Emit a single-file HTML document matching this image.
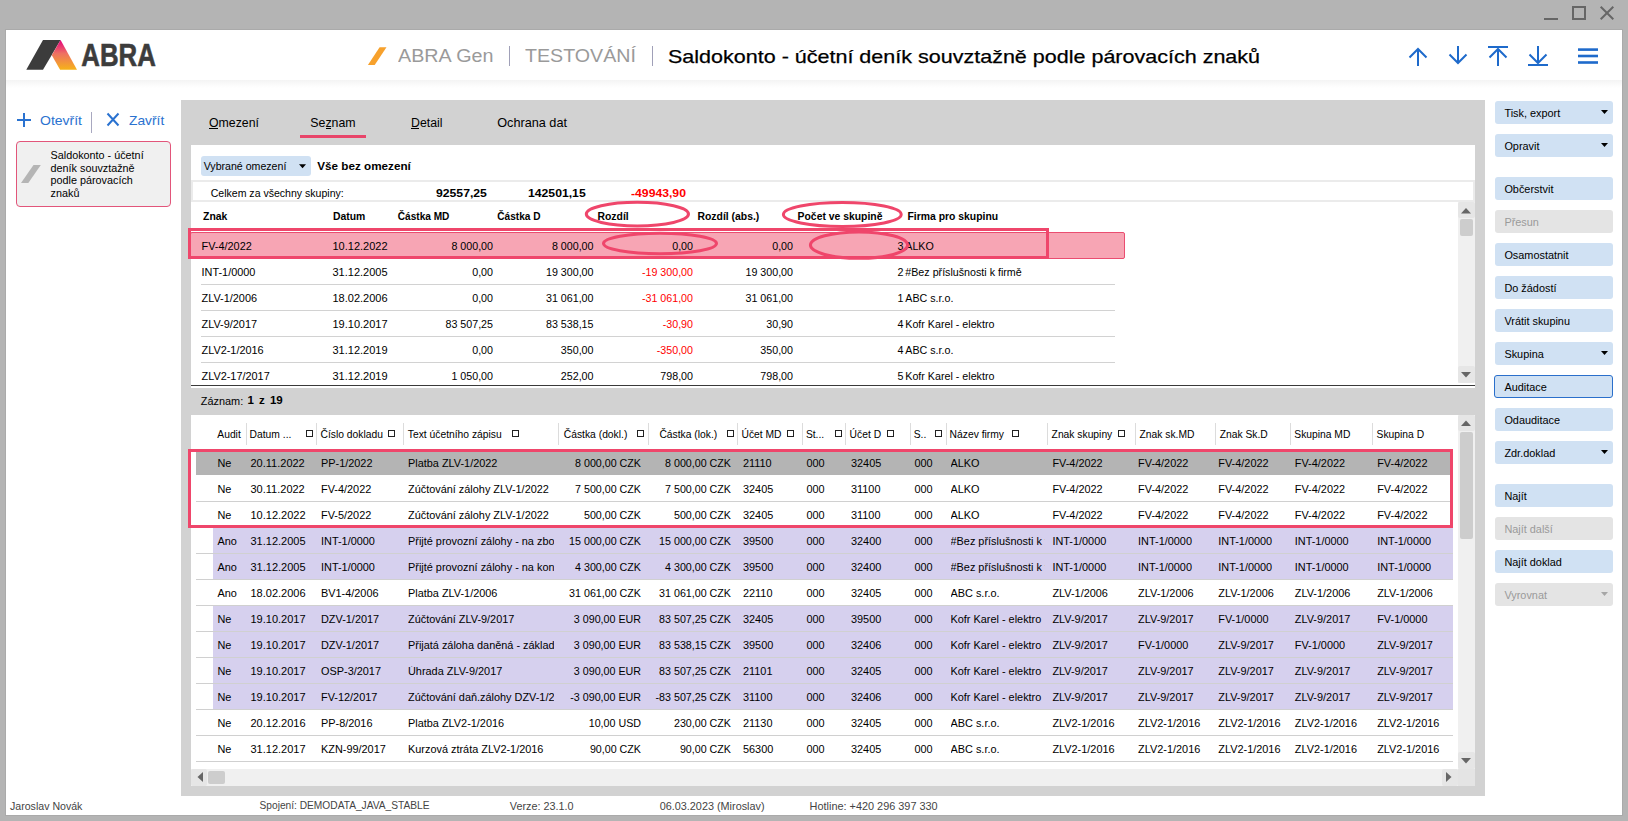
<!DOCTYPE html><html><head><meta charset="utf-8"><style>
html,body{margin:0;padding:0;}
body{width:1628px;height:821px;overflow:hidden;position:relative;background:#b4b4b4;font-family:"Liberation Sans",sans-serif;color:#000;}
div{position:absolute;box-sizing:border-box;}
.t{white-space:pre;}
svg{position:absolute;}
</style></head><body>
<div style="left:5px;top:29px;width:1618px;height:787px;background:#aaaaaa;"></div>
<div style="left:6px;top:30px;width:1616px;height:785px;background:#fff;"></div>
<div style="left:1544px;top:18px;width:14px;height:2px;background:#666;"></div>
<div style="left:1572px;top:6px;width:14px;height:14px;border:2px solid #666;"></div>
<svg style="left:1598px;top:4px" width="18" height="18" viewBox="1598 4 18 18"><path d="M1600.7 6.7L1613.3 19.3M1613.3 6.7L1600.7 19.3" stroke="#666" stroke-width="2" fill="none"/></svg>
<div style="left:6px;top:80px;width:1616px;height:8px;background:linear-gradient(#f4f4f4,#fbfbfb 60%,#fff);"></div>
<svg style="left:20px;top:36px" width="150" height="40" viewBox="20 36 150 40">
<defs><linearGradient id="lg" x1="0" y1="0" x2="0" y2="1"><stop offset="0" stop-color="#e5007d"/><stop offset="0.45" stop-color="#ee7063"/><stop offset="1" stop-color="#f6b318"/></linearGradient></defs>
<polygon points="43,40 60.6,40 43,69.8 26.3,69.8" fill="#3c3c3c"/>
<polygon points="60.6,40 77,69.8 60.1,69.8 51.8,55.3" fill="url(#lg)"/>
<text x="81.3" y="65.5" font-family="Liberation Sans" font-weight="700" font-size="31" fill="#3c3c3c" stroke="#3c3c3c" stroke-width="0.6" textLength="74.5" lengthAdjust="spacingAndGlyphs">ABRA</text>
</svg>
<svg style="left:360px;top:40px" width="40" height="30" viewBox="360 40 40 30"><polygon points="379.6,47.2 386.5,47.2 374.7,64.9 367.9,64.9" fill="#f7a12c"/></svg>
<div class="t" style="top:46.67px;font-size:18.7px;line-height:18.7px;color:#9a9a9a;left:397.70px;transform:scaleX(1.056);transform-origin:0 0;">ABRA Gen</div>
<div style="left:509px;top:46px;width:1px;height:20px;background:#a0a0b8;"></div>
<div class="t" style="top:46.67px;font-size:18.7px;line-height:18.7px;color:#9a9a9a;left:525.00px;transform:scaleX(1.051);transform-origin:0 0;">TESTOVÁNÍ</div>
<div style="left:652px;top:46px;width:1px;height:20px;background:#a0a0b8;"></div>
<div class="t" style="top:46.72px;font-size:19px;line-height:19px;left:668.40px;transform:scaleX(1.1324);transform-origin:0 0;-webkit-text-stroke:0.25px #000;">Saldokonto - účetní deník souvztažně podle párovacích znaků</div>
<svg style="left:1400px;top:40px" width="210" height="32" viewBox="1400 40 210 32">
<g stroke="#1e6acb" stroke-width="2" fill="none" stroke-linecap="butt">
<path d="M1418 66V49M1409.5 57.5L1418 49L1426.5 57.5"/>
<path d="M1458 46V63M1449.5 54.5L1458 63L1466.5 54.5"/>
<path d="M1488 47H1508M1498 66V49M1489.5 57.5L1498 49L1506.5 57.5"/>
<path d="M1538 46V63M1529.5 54.5L1538 63L1546.5 54.5M1528 65H1548"/>
</g>
<g fill="#1e6acb"><rect x="1578" y="48.3" width="20" height="2.6"/><rect x="1578" y="54.7" width="20" height="2.6"/><rect x="1578" y="61.2" width="20" height="2.6"/></g>
</svg>
<svg style="left:14px;top:110px" width="110" height="20" viewBox="14 110 110 20">
<g stroke="#2a72d0" stroke-width="2" fill="none"><path d="M17 120H31M24 113V127"/><path d="M107.5 113.5L118.5 125.5M118.5 113.5L107.5 125.5"/></g></svg>
<div class="t" style="top:114.30px;font-size:13px;line-height:13px;color:#2a72d0;left:39.80px;transform:scaleX(1.077);transform-origin:0 0;">Otevřít</div>
<div style="left:91px;top:112px;width:1px;height:21px;background:#a8a8c0;"></div>
<div class="t" style="top:114.30px;font-size:13px;line-height:13px;color:#2a72d0;left:129.00px;transform:scaleX(1.06);transform-origin:0 0;">Zavřít</div>
<div style="left:16px;top:141px;width:155px;height:66px;background:#f0f0f0;border:1px solid #e2557a;border-radius:4px;"></div>
<svg style="left:20px;top:162px" width="24" height="24" viewBox="20 162 24 24"><polygon points="33.5,165 40.8,165 28.3,183 21,183" fill="#b5b5b5"/></svg>
<div class="t" style="top:149.86px;font-size:10.8px;line-height:10.8px;left:50.60px;">Saldokonto - účetní</div>
<div class="t" style="top:162.66px;font-size:10.8px;line-height:10.8px;left:50.60px;">deník souvztažně</div>
<div class="t" style="top:175.46px;font-size:10.8px;line-height:10.8px;left:50.60px;">podle párovacích</div>
<div class="t" style="top:188.26px;font-size:10.8px;line-height:10.8px;left:50.60px;">znaků</div>
<div style="left:181px;top:100px;width:1304px;height:696px;background:#d2d2d2;"></div>
<div class="t" style="top:116.59px;font-size:12.3px;line-height:12.3px;left:209.00px;">Omezení</div>
<div style="left:209px;top:128px;width:9px;height:1px;background:#000;"></div>
<div class="t" style="top:116.55px;font-size:12.35px;line-height:12.35px;left:310.30px;">Seznam</div>
<div style="left:300px;top:135px;width:66px;height:3px;background:#e8456a;"></div>
<div style="left:326px;top:128px;width:5px;height:1px;background:#000;"></div>
<div class="t" style="top:116.59px;font-size:12.3px;line-height:12.3px;left:411.00px;">Detail</div>
<div style="left:411px;top:128px;width:8px;height:1px;background:#000;"></div>
<div class="t" style="top:117.25px;font-size:12.7px;line-height:12.7px;left:497.20px;">Ochrana dat</div>
<div style="left:191px;top:145px;width:1284px;height:241px;background:#fff;"></div>
<div style="left:201px;top:156px;width:110px;height:20px;background:#d0e1f3;border-radius:3px;"></div>
<div class="t" style="top:161.33px;font-size:10.6px;line-height:10.6px;left:203.70px;">Vybrané omezení</div>
<svg style="left:296px;top:162px" width="14" height="10" viewBox="296 162 14 10"><polygon points="299,164.3 306,164.3 302.5,168.3" fill="#000"/></svg>
<div class="t" style="top:159.70px;font-size:11.7px;line-height:11.7px;font-weight:700;left:317.30px;">Vše bez omezení</div>
<div style="left:191px;top:180px;width:1284px;height:22px;border:2px solid #ebebeb;"></div>
<div class="t" style="top:187.57px;font-size:10.55px;line-height:10.55px;left:210.70px;">Celkem za všechny skupiny:</div>
<div class="t" style="top:187.69px;font-size:11px;line-height:11px;font-weight:700;left:435.60px;transform:scaleX(1.109);transform-origin:0 0;">92557,25</div>
<div class="t" style="top:187.69px;font-size:11px;line-height:11px;font-weight:700;left:527.80px;transform:scaleX(1.109);transform-origin:0 0;">142501,15</div>
<div class="t" style="top:187.69px;font-size:11px;line-height:11px;font-weight:700;color:#ff0000;left:630.50px;transform:scaleX(1.109);transform-origin:0 0;">-49943,90</div>
<div class="t" style="top:211.50px;font-size:10.4px;line-height:10.4px;font-weight:700;left:203.10px;">Znak</div>
<div class="t" style="top:211.50px;font-size:10.4px;line-height:10.4px;font-weight:700;left:333.00px;">Datum</div>
<div class="t" style="top:211.75px;font-size:10.1px;line-height:10.1px;font-weight:700;left:397.80px;">Částka MD</div>
<div class="t" style="top:211.75px;font-size:10.1px;line-height:10.1px;font-weight:700;left:497.30px;">Částka D</div>
<div class="t" style="top:211.50px;font-size:10.4px;line-height:10.4px;font-weight:700;left:597.50px;">Rozdíl</div>
<div class="t" style="top:211.50px;font-size:10.4px;line-height:10.4px;font-weight:700;left:697.50px;">Rozdíl (abs.)</div>
<div class="t" style="top:211.50px;font-size:10.4px;line-height:10.4px;font-weight:700;left:797.60px;">Počet ve skupině</div>
<div class="t" style="top:211.50px;font-size:10.4px;line-height:10.4px;font-weight:700;left:907.50px;">Firma pro skupinu</div>
<div style="left:190px;top:232px;width:935px;height:27px;background:#f7a5b4;border:1px solid #ea4d70;border-radius:2px;"></div>
<div style="left:201px;top:310px;width:0px;height:0px;"></div>
<div style="left:201px;top:336px;width:0px;height:0px;"></div>
<div style="left:201px;top:362px;width:0px;height:0px;"></div>
<div style="left:201px;top:388px;width:0px;height:0px;"></div>
<div style="left:201px;top:414px;width:0px;height:0px;"></div>
<div class="t" style="top:240.77px;font-size:10.9px;line-height:10.9px;left:201.50px;">FV-4/2022</div>
<div class="t" style="top:240.69px;font-size:11px;line-height:11px;left:332.50px;">10.12.2022</div>
<div class="t" style="top:240.94px;font-size:10.7px;line-height:10.7px;right:1135.00px;text-align:right;">8 000,00</div>
<div class="t" style="top:240.94px;font-size:10.7px;line-height:10.7px;right:1034.50px;text-align:right;">8 000,00</div>
<div class="t" style="top:240.94px;font-size:10.7px;line-height:10.7px;right:935.00px;text-align:right;">0,00</div>
<div class="t" style="top:240.94px;font-size:10.7px;line-height:10.7px;right:835.00px;text-align:right;">0,00</div>
<div class="t" style="top:240.94px;font-size:10.7px;line-height:10.7px;right:724.50px;text-align:right;">3</div>
<div class="t" style="top:240.94px;font-size:10.7px;line-height:10.7px;left:905.30px;">ALKO</div>
<div class="t" style="top:266.77px;font-size:10.9px;line-height:10.9px;left:201.50px;">INT-1/0000</div>
<div class="t" style="top:266.69px;font-size:11px;line-height:11px;left:332.50px;">31.12.2005</div>
<div class="t" style="top:266.94px;font-size:10.7px;line-height:10.7px;right:1135.00px;text-align:right;">0,00</div>
<div class="t" style="top:266.94px;font-size:10.7px;line-height:10.7px;right:1034.50px;text-align:right;">19 300,00</div>
<div class="t" style="top:266.94px;font-size:10.7px;line-height:10.7px;color:#ff0000;right:935.00px;text-align:right;">-19 300,00</div>
<div class="t" style="top:266.94px;font-size:10.7px;line-height:10.7px;right:835.00px;text-align:right;">19 300,00</div>
<div class="t" style="top:266.94px;font-size:10.7px;line-height:10.7px;right:724.50px;text-align:right;">2</div>
<div class="t" style="top:266.94px;font-size:10.7px;line-height:10.7px;left:905.30px;">#Bez příslušnosti k firmě</div>
<div class="t" style="top:292.77px;font-size:10.9px;line-height:10.9px;left:201.50px;">ZLV-1/2006</div>
<div class="t" style="top:292.69px;font-size:11px;line-height:11px;left:332.50px;">18.02.2006</div>
<div class="t" style="top:292.94px;font-size:10.7px;line-height:10.7px;right:1135.00px;text-align:right;">0,00</div>
<div class="t" style="top:292.94px;font-size:10.7px;line-height:10.7px;right:1034.50px;text-align:right;">31 061,00</div>
<div class="t" style="top:292.94px;font-size:10.7px;line-height:10.7px;color:#ff0000;right:935.00px;text-align:right;">-31 061,00</div>
<div class="t" style="top:292.94px;font-size:10.7px;line-height:10.7px;right:835.00px;text-align:right;">31 061,00</div>
<div class="t" style="top:292.94px;font-size:10.7px;line-height:10.7px;right:724.50px;text-align:right;">1</div>
<div class="t" style="top:292.94px;font-size:10.7px;line-height:10.7px;left:905.30px;">ABC s.r.o.</div>
<div class="t" style="top:318.77px;font-size:10.9px;line-height:10.9px;left:201.50px;">ZLV-9/2017</div>
<div class="t" style="top:318.69px;font-size:11px;line-height:11px;left:332.50px;">19.10.2017</div>
<div class="t" style="top:318.94px;font-size:10.7px;line-height:10.7px;right:1135.00px;text-align:right;">83 507,25</div>
<div class="t" style="top:318.94px;font-size:10.7px;line-height:10.7px;right:1034.50px;text-align:right;">83 538,15</div>
<div class="t" style="top:318.94px;font-size:10.7px;line-height:10.7px;color:#ff0000;right:935.00px;text-align:right;">-30,90</div>
<div class="t" style="top:318.94px;font-size:10.7px;line-height:10.7px;right:835.00px;text-align:right;">30,90</div>
<div class="t" style="top:318.94px;font-size:10.7px;line-height:10.7px;right:724.50px;text-align:right;">4</div>
<div class="t" style="top:318.94px;font-size:10.7px;line-height:10.7px;left:905.30px;">Kofr Karel - elektro</div>
<div class="t" style="top:344.77px;font-size:10.9px;line-height:10.9px;left:201.50px;">ZLV2-1/2016</div>
<div class="t" style="top:344.69px;font-size:11px;line-height:11px;left:332.50px;">31.12.2019</div>
<div class="t" style="top:344.94px;font-size:10.7px;line-height:10.7px;right:1135.00px;text-align:right;">0,00</div>
<div class="t" style="top:344.94px;font-size:10.7px;line-height:10.7px;right:1034.50px;text-align:right;">350,00</div>
<div class="t" style="top:344.94px;font-size:10.7px;line-height:10.7px;color:#ff0000;right:935.00px;text-align:right;">-350,00</div>
<div class="t" style="top:344.94px;font-size:10.7px;line-height:10.7px;right:835.00px;text-align:right;">350,00</div>
<div class="t" style="top:344.94px;font-size:10.7px;line-height:10.7px;right:724.50px;text-align:right;">4</div>
<div class="t" style="top:344.94px;font-size:10.7px;line-height:10.7px;left:905.30px;">ABC s.r.o.</div>
<div class="t" style="top:370.77px;font-size:10.9px;line-height:10.9px;left:201.50px;">ZLV2-17/2017</div>
<div class="t" style="top:370.69px;font-size:11px;line-height:11px;left:332.50px;">31.12.2019</div>
<div class="t" style="top:370.94px;font-size:10.7px;line-height:10.7px;right:1135.00px;text-align:right;">1 050,00</div>
<div class="t" style="top:370.94px;font-size:10.7px;line-height:10.7px;right:1034.50px;text-align:right;">252,00</div>
<div class="t" style="top:370.94px;font-size:10.7px;line-height:10.7px;right:935.00px;text-align:right;">798,00</div>
<div class="t" style="top:370.94px;font-size:10.7px;line-height:10.7px;right:835.00px;text-align:right;">798,00</div>
<div class="t" style="top:370.94px;font-size:10.7px;line-height:10.7px;right:724.50px;text-align:right;">5</div>
<div class="t" style="top:370.94px;font-size:10.7px;line-height:10.7px;left:905.30px;">Kofr Karel - elektro</div>
<div style="left:201px;top:284px;width:914px;height:1px;background:#d2d2d2;"></div>
<div style="left:201px;top:310px;width:914px;height:1px;background:#d2d2d2;"></div>
<div style="left:201px;top:336px;width:914px;height:1px;background:#d2d2d2;"></div>
<div style="left:201px;top:362px;width:914px;height:1px;background:#d2d2d2;"></div>
<div style="left:1458px;top:202px;width:17px;height:181px;background:#f0f0f0;"></div>
<div style="left:1458px;top:202px;width:17px;height:16px;background:#e6e6e6;border-radius:2px;"></div>
<div style="left:1460px;top:219px;width:13px;height:17px;background:#cdcdcd;border-radius:2px;"></div>
<div style="left:1458px;top:366px;width:17px;height:17px;background:#e6e6e6;border-radius:2px;"></div>
<svg style="left:1458px;top:202px" width="17" height="181" viewBox="1458 202 17 181"><polygon points="1461,213.5 1471,213.5 1466,208" fill="#666"/><polygon points="1461,372 1471,372 1466,377.5" fill="#666"/></svg>
<div style="left:191px;top:385px;width:1284px;height:1px;background:#3a3a3a;"></div>
<div style="left:191px;top:386px;width:1284px;height:2px;background:#fff;"></div>
<div class="t" style="top:395.77px;font-size:10.9px;line-height:10.9px;left:200.80px;">Záznam:</div>
<div class="t" style="top:395.27px;font-size:11.5px;line-height:11.5px;font-weight:700;left:247.40px;word-spacing:2px;">1 z 19</div>
<div style="left:191px;top:415px;width:1284px;height:371px;background:#fff;"></div>
<div class="t" style="top:430.28px;font-size:10.3px;line-height:10.3px;left:217.30px;">Audit</div>
<div style="left:246px;top:423px;width:1px;height:22px;background:#dcdcdc;"></div>
<div class="t" style="top:430.28px;font-size:10.3px;line-height:10.3px;left:249.60px;">Datum ...</div>
<div style="left:306px;top:430px;width:7px;height:7px;border:1px solid #222;"></div>
<div style="left:316px;top:423px;width:1px;height:22px;background:#dcdcdc;"></div>
<div class="t" style="top:430.28px;font-size:10.3px;line-height:10.3px;left:320.50px;">Číslo dokladu</div>
<div style="left:388px;top:430px;width:7px;height:7px;border:1px solid #222;"></div>
<div style="left:403px;top:423px;width:1px;height:22px;background:#dcdcdc;"></div>
<div class="t" style="top:430.28px;font-size:10.3px;line-height:10.3px;left:407.80px;">Text účetního zápisu</div>
<div style="left:512px;top:430px;width:7px;height:7px;border:1px solid #222;"></div>
<div style="left:558px;top:423px;width:1px;height:22px;background:#dcdcdc;"></div>
<div class="t" style="top:430.28px;font-size:10.3px;line-height:10.3px;left:563.80px;">Částka (dokl.)</div>
<div style="left:637px;top:430px;width:7px;height:7px;border:1px solid #222;"></div>
<div style="left:648px;top:423px;width:1px;height:22px;background:#dcdcdc;"></div>
<div class="t" style="top:430.28px;font-size:10.3px;line-height:10.3px;left:659.40px;">Částka (lok.)</div>
<div style="left:727px;top:430px;width:7px;height:7px;border:1px solid #222;"></div>
<div style="left:737px;top:423px;width:1px;height:22px;background:#dcdcdc;"></div>
<div class="t" style="top:430.28px;font-size:10.3px;line-height:10.3px;left:741.50px;">Účet MD</div>
<div style="left:787px;top:430px;width:7px;height:7px;border:1px solid #222;"></div>
<div style="left:802px;top:423px;width:1px;height:22px;background:#dcdcdc;"></div>
<div class="t" style="top:430.28px;font-size:10.3px;line-height:10.3px;left:805.90px;">St...</div>
<div style="left:835px;top:430px;width:7px;height:7px;border:1px solid #222;"></div>
<div style="left:845px;top:423px;width:1px;height:22px;background:#dcdcdc;"></div>
<div class="t" style="top:430.28px;font-size:10.3px;line-height:10.3px;left:849.60px;">Účet D</div>
<div style="left:887px;top:430px;width:7px;height:7px;border:1px solid #222;"></div>
<div style="left:910px;top:423px;width:1px;height:22px;background:#dcdcdc;"></div>
<div class="t" style="top:430.28px;font-size:10.3px;line-height:10.3px;left:913.70px;">S..</div>
<div style="left:935px;top:430px;width:7px;height:7px;border:1px solid #222;"></div>
<div style="left:946px;top:423px;width:1px;height:22px;background:#dcdcdc;"></div>
<div class="t" style="top:430.28px;font-size:10.3px;line-height:10.3px;left:949.60px;">Název firmy</div>
<div style="left:1012px;top:430px;width:7px;height:7px;border:1px solid #222;"></div>
<div style="left:1047px;top:423px;width:1px;height:22px;background:#dcdcdc;"></div>
<div class="t" style="top:430.28px;font-size:10.3px;line-height:10.3px;left:1051.60px;">Znak skupiny</div>
<div style="left:1118px;top:430px;width:7px;height:7px;border:1px solid #222;"></div>
<div style="left:1135px;top:423px;width:1px;height:22px;background:#dcdcdc;"></div>
<div class="t" style="top:430.28px;font-size:10.3px;line-height:10.3px;left:1139.50px;">Znak sk.MD</div>
<div style="left:1215px;top:423px;width:1px;height:22px;background:#dcdcdc;"></div>
<div class="t" style="top:430.28px;font-size:10.3px;line-height:10.3px;left:1219.70px;">Znak Sk.D</div>
<div style="left:1290px;top:423px;width:1px;height:22px;background:#dcdcdc;"></div>
<div class="t" style="top:430.28px;font-size:10.3px;line-height:10.3px;left:1294.30px;">Skupina MD</div>
<div style="left:1372px;top:423px;width:1px;height:22px;background:#dcdcdc;"></div>
<div class="t" style="top:430.28px;font-size:10.3px;line-height:10.3px;left:1376.60px;">Skupina D</div>
<div style="left:196px;top:452px;width:1257px;height:23px;background:#b4b4b4;"></div>
<div style="left:213px;top:527px;width:1240px;height:26px;background:#d6d0ee;"></div>
<div style="left:213px;top:553px;width:1240px;height:26px;background:#d6d0ee;"></div>
<div style="left:213px;top:605px;width:1240px;height:26px;background:#d6d0ee;"></div>
<div style="left:213px;top:631px;width:1240px;height:26px;background:#d6d0ee;"></div>
<div style="left:213px;top:657px;width:1240px;height:26px;background:#d6d0ee;"></div>
<div style="left:213px;top:683px;width:1240px;height:26px;background:#d6d0ee;"></div>
<div style="left:196px;top:501px;width:1257px;height:1px;background:#d0d0d0;"></div>
<div style="left:196px;top:527px;width:1257px;height:1px;background:#d0d0d0;"></div>
<div style="left:196px;top:553px;width:1257px;height:1px;background:#d0d0d0;"></div>
<div style="left:196px;top:579px;width:1257px;height:1px;background:#d0d0d0;"></div>
<div style="left:196px;top:605px;width:1257px;height:1px;background:#d0d0d0;"></div>
<div style="left:196px;top:631px;width:1257px;height:1px;background:#d0d0d0;"></div>
<div style="left:196px;top:657px;width:1257px;height:1px;background:#d0d0d0;"></div>
<div style="left:196px;top:683px;width:1257px;height:1px;background:#d0d0d0;"></div>
<div style="left:196px;top:709px;width:1257px;height:1px;background:#d0d0d0;"></div>
<div style="left:196px;top:735px;width:1257px;height:1px;background:#d0d0d0;"></div>
<div style="left:196px;top:761px;width:1257px;height:1px;background:#d0d0d0;"></div>
<div class="t" style="top:457.77px;font-size:10.9px;line-height:10.9px;left:217.50px;">Ne</div>
<div class="t" style="top:457.69px;font-size:11px;line-height:11px;left:250.50px;">20.11.2022</div>
<div class="t" style="top:457.77px;font-size:10.9px;line-height:10.9px;left:321.00px;">PP-1/2022</div>
<div class="t" style="top:457.77px;font-size:10.9px;line-height:10.9px;left:408.00px;width:146px;overflow:hidden;">Platba ZLV-1/2022</div>
<div class="t" style="top:457.94px;font-size:10.7px;line-height:10.7px;right:987.00px;text-align:right;">8 000,00 CZK</div>
<div class="t" style="top:457.94px;font-size:10.7px;line-height:10.7px;right:897.00px;text-align:right;">8 000,00 CZK</div>
<div class="t" style="top:457.77px;font-size:10.9px;line-height:10.9px;left:743.00px;">21110</div>
<div class="t" style="top:457.77px;font-size:10.9px;line-height:10.9px;left:806.50px;">000</div>
<div class="t" style="top:457.77px;font-size:10.9px;line-height:10.9px;left:851.00px;">32405</div>
<div class="t" style="top:457.77px;font-size:10.9px;line-height:10.9px;left:914.50px;">000</div>
<div class="t" style="top:457.77px;font-size:10.9px;line-height:10.9px;left:950.50px;width:94px;overflow:hidden;">ALKO</div>
<div class="t" style="top:457.77px;font-size:10.9px;line-height:10.9px;left:1052.40px;">FV-4/2022</div>
<div class="t" style="top:457.77px;font-size:10.9px;line-height:10.9px;left:1138.10px;">FV-4/2022</div>
<div class="t" style="top:457.77px;font-size:10.9px;line-height:10.9px;left:1218.30px;">FV-4/2022</div>
<div class="t" style="top:457.77px;font-size:10.9px;line-height:10.9px;left:1294.80px;">FV-4/2022</div>
<div class="t" style="top:457.77px;font-size:10.9px;line-height:10.9px;left:1377.20px;">FV-4/2022</div>
<div class="t" style="top:483.77px;font-size:10.9px;line-height:10.9px;left:217.50px;">Ne</div>
<div class="t" style="top:483.69px;font-size:11px;line-height:11px;left:250.50px;">30.11.2022</div>
<div class="t" style="top:483.77px;font-size:10.9px;line-height:10.9px;left:321.00px;">FV-4/2022</div>
<div class="t" style="top:483.77px;font-size:10.9px;line-height:10.9px;left:408.00px;width:146px;overflow:hidden;">Zúčtování zálohy ZLV-1/2022</div>
<div class="t" style="top:483.94px;font-size:10.7px;line-height:10.7px;right:987.00px;text-align:right;">7 500,00 CZK</div>
<div class="t" style="top:483.94px;font-size:10.7px;line-height:10.7px;right:897.00px;text-align:right;">7 500,00 CZK</div>
<div class="t" style="top:483.77px;font-size:10.9px;line-height:10.9px;left:743.00px;">32405</div>
<div class="t" style="top:483.77px;font-size:10.9px;line-height:10.9px;left:806.50px;">000</div>
<div class="t" style="top:483.77px;font-size:10.9px;line-height:10.9px;left:851.00px;">31100</div>
<div class="t" style="top:483.77px;font-size:10.9px;line-height:10.9px;left:914.50px;">000</div>
<div class="t" style="top:483.77px;font-size:10.9px;line-height:10.9px;left:950.50px;width:94px;overflow:hidden;">ALKO</div>
<div class="t" style="top:483.77px;font-size:10.9px;line-height:10.9px;left:1052.40px;">FV-4/2022</div>
<div class="t" style="top:483.77px;font-size:10.9px;line-height:10.9px;left:1138.10px;">FV-4/2022</div>
<div class="t" style="top:483.77px;font-size:10.9px;line-height:10.9px;left:1218.30px;">FV-4/2022</div>
<div class="t" style="top:483.77px;font-size:10.9px;line-height:10.9px;left:1294.80px;">FV-4/2022</div>
<div class="t" style="top:483.77px;font-size:10.9px;line-height:10.9px;left:1377.20px;">FV-4/2022</div>
<div class="t" style="top:509.77px;font-size:10.9px;line-height:10.9px;left:217.50px;">Ne</div>
<div class="t" style="top:509.69px;font-size:11px;line-height:11px;left:250.50px;">10.12.2022</div>
<div class="t" style="top:509.77px;font-size:10.9px;line-height:10.9px;left:321.00px;">FV-5/2022</div>
<div class="t" style="top:509.77px;font-size:10.9px;line-height:10.9px;left:408.00px;width:146px;overflow:hidden;">Zúčtování zálohy ZLV-1/2022</div>
<div class="t" style="top:509.94px;font-size:10.7px;line-height:10.7px;right:987.00px;text-align:right;">500,00 CZK</div>
<div class="t" style="top:509.94px;font-size:10.7px;line-height:10.7px;right:897.00px;text-align:right;">500,00 CZK</div>
<div class="t" style="top:509.77px;font-size:10.9px;line-height:10.9px;left:743.00px;">32405</div>
<div class="t" style="top:509.77px;font-size:10.9px;line-height:10.9px;left:806.50px;">000</div>
<div class="t" style="top:509.77px;font-size:10.9px;line-height:10.9px;left:851.00px;">31100</div>
<div class="t" style="top:509.77px;font-size:10.9px;line-height:10.9px;left:914.50px;">000</div>
<div class="t" style="top:509.77px;font-size:10.9px;line-height:10.9px;left:950.50px;width:94px;overflow:hidden;">ALKO</div>
<div class="t" style="top:509.77px;font-size:10.9px;line-height:10.9px;left:1052.40px;">FV-4/2022</div>
<div class="t" style="top:509.77px;font-size:10.9px;line-height:10.9px;left:1138.10px;">FV-4/2022</div>
<div class="t" style="top:509.77px;font-size:10.9px;line-height:10.9px;left:1218.30px;">FV-4/2022</div>
<div class="t" style="top:509.77px;font-size:10.9px;line-height:10.9px;left:1294.80px;">FV-4/2022</div>
<div class="t" style="top:509.77px;font-size:10.9px;line-height:10.9px;left:1377.20px;">FV-4/2022</div>
<div class="t" style="top:535.77px;font-size:10.9px;line-height:10.9px;left:217.50px;">Ano</div>
<div class="t" style="top:535.69px;font-size:11px;line-height:11px;left:250.50px;">31.12.2005</div>
<div class="t" style="top:535.77px;font-size:10.9px;line-height:10.9px;left:321.00px;">INT-1/0000</div>
<div class="t" style="top:535.77px;font-size:10.9px;line-height:10.9px;left:408.00px;width:146px;overflow:hidden;">Přijté provozní zálohy - na zboží</div>
<div class="t" style="top:535.94px;font-size:10.7px;line-height:10.7px;right:987.00px;text-align:right;">15 000,00 CZK</div>
<div class="t" style="top:535.94px;font-size:10.7px;line-height:10.7px;right:897.00px;text-align:right;">15 000,00 CZK</div>
<div class="t" style="top:535.77px;font-size:10.9px;line-height:10.9px;left:743.00px;">39500</div>
<div class="t" style="top:535.77px;font-size:10.9px;line-height:10.9px;left:806.50px;">000</div>
<div class="t" style="top:535.77px;font-size:10.9px;line-height:10.9px;left:851.00px;">32400</div>
<div class="t" style="top:535.77px;font-size:10.9px;line-height:10.9px;left:914.50px;">000</div>
<div class="t" style="top:535.77px;font-size:10.9px;line-height:10.9px;left:950.50px;width:94px;overflow:hidden;">#Bez příslušnosti k firmě</div>
<div class="t" style="top:535.77px;font-size:10.9px;line-height:10.9px;left:1052.40px;">INT-1/0000</div>
<div class="t" style="top:535.77px;font-size:10.9px;line-height:10.9px;left:1138.10px;">INT-1/0000</div>
<div class="t" style="top:535.77px;font-size:10.9px;line-height:10.9px;left:1218.30px;">INT-1/0000</div>
<div class="t" style="top:535.77px;font-size:10.9px;line-height:10.9px;left:1294.80px;">INT-1/0000</div>
<div class="t" style="top:535.77px;font-size:10.9px;line-height:10.9px;left:1377.20px;">INT-1/0000</div>
<div class="t" style="top:561.77px;font-size:10.9px;line-height:10.9px;left:217.50px;">Ano</div>
<div class="t" style="top:561.69px;font-size:11px;line-height:11px;left:250.50px;">31.12.2005</div>
<div class="t" style="top:561.77px;font-size:10.9px;line-height:10.9px;left:321.00px;">INT-1/0000</div>
<div class="t" style="top:561.77px;font-size:10.9px;line-height:10.9px;left:408.00px;width:146px;overflow:hidden;">Přijté provozní zálohy - na konto</div>
<div class="t" style="top:561.94px;font-size:10.7px;line-height:10.7px;right:987.00px;text-align:right;">4 300,00 CZK</div>
<div class="t" style="top:561.94px;font-size:10.7px;line-height:10.7px;right:897.00px;text-align:right;">4 300,00 CZK</div>
<div class="t" style="top:561.77px;font-size:10.9px;line-height:10.9px;left:743.00px;">39500</div>
<div class="t" style="top:561.77px;font-size:10.9px;line-height:10.9px;left:806.50px;">000</div>
<div class="t" style="top:561.77px;font-size:10.9px;line-height:10.9px;left:851.00px;">32400</div>
<div class="t" style="top:561.77px;font-size:10.9px;line-height:10.9px;left:914.50px;">000</div>
<div class="t" style="top:561.77px;font-size:10.9px;line-height:10.9px;left:950.50px;width:94px;overflow:hidden;">#Bez příslušnosti k firmě</div>
<div class="t" style="top:561.77px;font-size:10.9px;line-height:10.9px;left:1052.40px;">INT-1/0000</div>
<div class="t" style="top:561.77px;font-size:10.9px;line-height:10.9px;left:1138.10px;">INT-1/0000</div>
<div class="t" style="top:561.77px;font-size:10.9px;line-height:10.9px;left:1218.30px;">INT-1/0000</div>
<div class="t" style="top:561.77px;font-size:10.9px;line-height:10.9px;left:1294.80px;">INT-1/0000</div>
<div class="t" style="top:561.77px;font-size:10.9px;line-height:10.9px;left:1377.20px;">INT-1/0000</div>
<div class="t" style="top:587.77px;font-size:10.9px;line-height:10.9px;left:217.50px;">Ano</div>
<div class="t" style="top:587.69px;font-size:11px;line-height:11px;left:250.50px;">18.02.2006</div>
<div class="t" style="top:587.77px;font-size:10.9px;line-height:10.9px;left:321.00px;">BV1-4/2006</div>
<div class="t" style="top:587.77px;font-size:10.9px;line-height:10.9px;left:408.00px;width:146px;overflow:hidden;">Platba ZLV-1/2006</div>
<div class="t" style="top:587.94px;font-size:10.7px;line-height:10.7px;right:987.00px;text-align:right;">31 061,00 CZK</div>
<div class="t" style="top:587.94px;font-size:10.7px;line-height:10.7px;right:897.00px;text-align:right;">31 061,00 CZK</div>
<div class="t" style="top:587.77px;font-size:10.9px;line-height:10.9px;left:743.00px;">22110</div>
<div class="t" style="top:587.77px;font-size:10.9px;line-height:10.9px;left:806.50px;">000</div>
<div class="t" style="top:587.77px;font-size:10.9px;line-height:10.9px;left:851.00px;">32405</div>
<div class="t" style="top:587.77px;font-size:10.9px;line-height:10.9px;left:914.50px;">000</div>
<div class="t" style="top:587.77px;font-size:10.9px;line-height:10.9px;left:950.50px;width:94px;overflow:hidden;">ABC s.r.o.</div>
<div class="t" style="top:587.77px;font-size:10.9px;line-height:10.9px;left:1052.40px;">ZLV-1/2006</div>
<div class="t" style="top:587.77px;font-size:10.9px;line-height:10.9px;left:1138.10px;">ZLV-1/2006</div>
<div class="t" style="top:587.77px;font-size:10.9px;line-height:10.9px;left:1218.30px;">ZLV-1/2006</div>
<div class="t" style="top:587.77px;font-size:10.9px;line-height:10.9px;left:1294.80px;">ZLV-1/2006</div>
<div class="t" style="top:587.77px;font-size:10.9px;line-height:10.9px;left:1377.20px;">ZLV-1/2006</div>
<div class="t" style="top:613.77px;font-size:10.9px;line-height:10.9px;left:217.50px;">Ne</div>
<div class="t" style="top:613.69px;font-size:11px;line-height:11px;left:250.50px;">19.10.2017</div>
<div class="t" style="top:613.77px;font-size:10.9px;line-height:10.9px;left:321.00px;">DZV-1/2017</div>
<div class="t" style="top:613.77px;font-size:10.9px;line-height:10.9px;left:408.00px;width:146px;overflow:hidden;">Zúčtování ZLV-9/2017</div>
<div class="t" style="top:613.94px;font-size:10.7px;line-height:10.7px;right:987.00px;text-align:right;">3 090,00 EUR</div>
<div class="t" style="top:613.94px;font-size:10.7px;line-height:10.7px;right:897.00px;text-align:right;">83 507,25 CZK</div>
<div class="t" style="top:613.77px;font-size:10.9px;line-height:10.9px;left:743.00px;">32405</div>
<div class="t" style="top:613.77px;font-size:10.9px;line-height:10.9px;left:806.50px;">000</div>
<div class="t" style="top:613.77px;font-size:10.9px;line-height:10.9px;left:851.00px;">39500</div>
<div class="t" style="top:613.77px;font-size:10.9px;line-height:10.9px;left:914.50px;">000</div>
<div class="t" style="top:613.77px;font-size:10.9px;line-height:10.9px;left:950.50px;width:94px;overflow:hidden;">Kofr Karel - elektro</div>
<div class="t" style="top:613.77px;font-size:10.9px;line-height:10.9px;left:1052.40px;">ZLV-9/2017</div>
<div class="t" style="top:613.77px;font-size:10.9px;line-height:10.9px;left:1138.10px;">ZLV-9/2017</div>
<div class="t" style="top:613.77px;font-size:10.9px;line-height:10.9px;left:1218.30px;">FV-1/0000</div>
<div class="t" style="top:613.77px;font-size:10.9px;line-height:10.9px;left:1294.80px;">ZLV-9/2017</div>
<div class="t" style="top:613.77px;font-size:10.9px;line-height:10.9px;left:1377.20px;">FV-1/0000</div>
<div class="t" style="top:639.77px;font-size:10.9px;line-height:10.9px;left:217.50px;">Ne</div>
<div class="t" style="top:639.69px;font-size:11px;line-height:11px;left:250.50px;">19.10.2017</div>
<div class="t" style="top:639.77px;font-size:10.9px;line-height:10.9px;left:321.00px;">DZV-1/2017</div>
<div class="t" style="top:639.77px;font-size:10.9px;line-height:10.9px;left:408.00px;width:146px;overflow:hidden;">Přijatá záloha daněná - základ</div>
<div class="t" style="top:639.94px;font-size:10.7px;line-height:10.7px;right:987.00px;text-align:right;">3 090,00 EUR</div>
<div class="t" style="top:639.94px;font-size:10.7px;line-height:10.7px;right:897.00px;text-align:right;">83 538,15 CZK</div>
<div class="t" style="top:639.77px;font-size:10.9px;line-height:10.9px;left:743.00px;">39500</div>
<div class="t" style="top:639.77px;font-size:10.9px;line-height:10.9px;left:806.50px;">000</div>
<div class="t" style="top:639.77px;font-size:10.9px;line-height:10.9px;left:851.00px;">32406</div>
<div class="t" style="top:639.77px;font-size:10.9px;line-height:10.9px;left:914.50px;">000</div>
<div class="t" style="top:639.77px;font-size:10.9px;line-height:10.9px;left:950.50px;width:94px;overflow:hidden;">Kofr Karel - elektro</div>
<div class="t" style="top:639.77px;font-size:10.9px;line-height:10.9px;left:1052.40px;">ZLV-9/2017</div>
<div class="t" style="top:639.77px;font-size:10.9px;line-height:10.9px;left:1138.10px;">FV-1/0000</div>
<div class="t" style="top:639.77px;font-size:10.9px;line-height:10.9px;left:1218.30px;">ZLV-9/2017</div>
<div class="t" style="top:639.77px;font-size:10.9px;line-height:10.9px;left:1294.80px;">FV-1/0000</div>
<div class="t" style="top:639.77px;font-size:10.9px;line-height:10.9px;left:1377.20px;">ZLV-9/2017</div>
<div class="t" style="top:665.77px;font-size:10.9px;line-height:10.9px;left:217.50px;">Ne</div>
<div class="t" style="top:665.69px;font-size:11px;line-height:11px;left:250.50px;">19.10.2017</div>
<div class="t" style="top:665.77px;font-size:10.9px;line-height:10.9px;left:321.00px;">OSP-3/2017</div>
<div class="t" style="top:665.77px;font-size:10.9px;line-height:10.9px;left:408.00px;width:146px;overflow:hidden;">Úhrada ZLV-9/2017</div>
<div class="t" style="top:665.94px;font-size:10.7px;line-height:10.7px;right:987.00px;text-align:right;">3 090,00 EUR</div>
<div class="t" style="top:665.94px;font-size:10.7px;line-height:10.7px;right:897.00px;text-align:right;">83 507,25 CZK</div>
<div class="t" style="top:665.77px;font-size:10.9px;line-height:10.9px;left:743.00px;">21101</div>
<div class="t" style="top:665.77px;font-size:10.9px;line-height:10.9px;left:806.50px;">000</div>
<div class="t" style="top:665.77px;font-size:10.9px;line-height:10.9px;left:851.00px;">32405</div>
<div class="t" style="top:665.77px;font-size:10.9px;line-height:10.9px;left:914.50px;">000</div>
<div class="t" style="top:665.77px;font-size:10.9px;line-height:10.9px;left:950.50px;width:94px;overflow:hidden;">Kofr Karel - elektro</div>
<div class="t" style="top:665.77px;font-size:10.9px;line-height:10.9px;left:1052.40px;">ZLV-9/2017</div>
<div class="t" style="top:665.77px;font-size:10.9px;line-height:10.9px;left:1138.10px;">ZLV-9/2017</div>
<div class="t" style="top:665.77px;font-size:10.9px;line-height:10.9px;left:1218.30px;">ZLV-9/2017</div>
<div class="t" style="top:665.77px;font-size:10.9px;line-height:10.9px;left:1294.80px;">ZLV-9/2017</div>
<div class="t" style="top:665.77px;font-size:10.9px;line-height:10.9px;left:1377.20px;">ZLV-9/2017</div>
<div class="t" style="top:691.77px;font-size:10.9px;line-height:10.9px;left:217.50px;">Ne</div>
<div class="t" style="top:691.69px;font-size:11px;line-height:11px;left:250.50px;">19.10.2017</div>
<div class="t" style="top:691.77px;font-size:10.9px;line-height:10.9px;left:321.00px;">FV-12/2017</div>
<div class="t" style="top:691.77px;font-size:10.9px;line-height:10.9px;left:408.00px;width:146px;overflow:hidden;">Zúčtování daň.zálohy DZV-1/2017</div>
<div class="t" style="top:691.94px;font-size:10.7px;line-height:10.7px;right:987.00px;text-align:right;">-3 090,00 EUR</div>
<div class="t" style="top:691.94px;font-size:10.7px;line-height:10.7px;right:897.00px;text-align:right;">-83 507,25 CZK</div>
<div class="t" style="top:691.77px;font-size:10.9px;line-height:10.9px;left:743.00px;">31100</div>
<div class="t" style="top:691.77px;font-size:10.9px;line-height:10.9px;left:806.50px;">000</div>
<div class="t" style="top:691.77px;font-size:10.9px;line-height:10.9px;left:851.00px;">32406</div>
<div class="t" style="top:691.77px;font-size:10.9px;line-height:10.9px;left:914.50px;">000</div>
<div class="t" style="top:691.77px;font-size:10.9px;line-height:10.9px;left:950.50px;width:94px;overflow:hidden;">Kofr Karel - elektro</div>
<div class="t" style="top:691.77px;font-size:10.9px;line-height:10.9px;left:1052.40px;">ZLV-9/2017</div>
<div class="t" style="top:691.77px;font-size:10.9px;line-height:10.9px;left:1138.10px;">ZLV-9/2017</div>
<div class="t" style="top:691.77px;font-size:10.9px;line-height:10.9px;left:1218.30px;">ZLV-9/2017</div>
<div class="t" style="top:691.77px;font-size:10.9px;line-height:10.9px;left:1294.80px;">ZLV-9/2017</div>
<div class="t" style="top:691.77px;font-size:10.9px;line-height:10.9px;left:1377.20px;">ZLV-9/2017</div>
<div class="t" style="top:717.77px;font-size:10.9px;line-height:10.9px;left:217.50px;">Ne</div>
<div class="t" style="top:717.69px;font-size:11px;line-height:11px;left:250.50px;">20.12.2016</div>
<div class="t" style="top:717.77px;font-size:10.9px;line-height:10.9px;left:321.00px;">PP-8/2016</div>
<div class="t" style="top:717.77px;font-size:10.9px;line-height:10.9px;left:408.00px;width:146px;overflow:hidden;">Platba ZLV2-1/2016</div>
<div class="t" style="top:717.94px;font-size:10.7px;line-height:10.7px;right:987.00px;text-align:right;">10,00 USD</div>
<div class="t" style="top:717.94px;font-size:10.7px;line-height:10.7px;right:897.00px;text-align:right;">230,00 CZK</div>
<div class="t" style="top:717.77px;font-size:10.9px;line-height:10.9px;left:743.00px;">21130</div>
<div class="t" style="top:717.77px;font-size:10.9px;line-height:10.9px;left:806.50px;">000</div>
<div class="t" style="top:717.77px;font-size:10.9px;line-height:10.9px;left:851.00px;">32405</div>
<div class="t" style="top:717.77px;font-size:10.9px;line-height:10.9px;left:914.50px;">000</div>
<div class="t" style="top:717.77px;font-size:10.9px;line-height:10.9px;left:950.50px;width:94px;overflow:hidden;">ABC s.r.o.</div>
<div class="t" style="top:717.77px;font-size:10.9px;line-height:10.9px;left:1052.40px;">ZLV2-1/2016</div>
<div class="t" style="top:717.77px;font-size:10.9px;line-height:10.9px;left:1138.10px;">ZLV2-1/2016</div>
<div class="t" style="top:717.77px;font-size:10.9px;line-height:10.9px;left:1218.30px;">ZLV2-1/2016</div>
<div class="t" style="top:717.77px;font-size:10.9px;line-height:10.9px;left:1294.80px;">ZLV2-1/2016</div>
<div class="t" style="top:717.77px;font-size:10.9px;line-height:10.9px;left:1377.20px;">ZLV2-1/2016</div>
<div class="t" style="top:743.77px;font-size:10.9px;line-height:10.9px;left:217.50px;">Ne</div>
<div class="t" style="top:743.69px;font-size:11px;line-height:11px;left:250.50px;">31.12.2017</div>
<div class="t" style="top:743.77px;font-size:10.9px;line-height:10.9px;left:321.00px;">KZN-99/2017</div>
<div class="t" style="top:743.77px;font-size:10.9px;line-height:10.9px;left:408.00px;width:146px;overflow:hidden;">Kurzová ztráta ZLV2-1/2016</div>
<div class="t" style="top:743.94px;font-size:10.7px;line-height:10.7px;right:987.00px;text-align:right;">90,00 CZK</div>
<div class="t" style="top:743.94px;font-size:10.7px;line-height:10.7px;right:897.00px;text-align:right;">90,00 CZK</div>
<div class="t" style="top:743.77px;font-size:10.9px;line-height:10.9px;left:743.00px;">56300</div>
<div class="t" style="top:743.77px;font-size:10.9px;line-height:10.9px;left:806.50px;">000</div>
<div class="t" style="top:743.77px;font-size:10.9px;line-height:10.9px;left:851.00px;">32405</div>
<div class="t" style="top:743.77px;font-size:10.9px;line-height:10.9px;left:914.50px;">000</div>
<div class="t" style="top:743.77px;font-size:10.9px;line-height:10.9px;left:950.50px;width:94px;overflow:hidden;">ABC s.r.o.</div>
<div class="t" style="top:743.77px;font-size:10.9px;line-height:10.9px;left:1052.40px;">ZLV2-1/2016</div>
<div class="t" style="top:743.77px;font-size:10.9px;line-height:10.9px;left:1138.10px;">ZLV2-1/2016</div>
<div class="t" style="top:743.77px;font-size:10.9px;line-height:10.9px;left:1218.30px;">ZLV2-1/2016</div>
<div class="t" style="top:743.77px;font-size:10.9px;line-height:10.9px;left:1294.80px;">ZLV2-1/2016</div>
<div class="t" style="top:743.77px;font-size:10.9px;line-height:10.9px;left:1377.20px;">ZLV2-1/2016</div>
<div style="left:1458px;top:415px;width:17px;height:354px;background:#f0f0f0;"></div>
<div style="left:1458px;top:415px;width:17px;height:16px;background:#e6e6e6;border-radius:2px;"></div>
<div style="left:1460px;top:432px;width:13px;height:107px;background:#cdcdcd;border-radius:2px;"></div>
<div style="left:1458px;top:752px;width:17px;height:17px;background:#e6e6e6;border-radius:2px;"></div>
<div style="left:191px;top:769px;width:1267px;height:17px;background:#f0f0f0;"></div>
<div style="left:191px;top:769px;width:16px;height:17px;background:#e6e6e6;border-radius:2px;"></div>
<div style="left:208px;top:771px;width:17px;height:13px;background:#cdcdcd;border-radius:2px;"></div>
<div style="left:1442px;top:769px;width:16px;height:17px;background:#e6e6e6;border-radius:2px;"></div>
<div style="left:1458px;top:769px;width:17px;height:17px;background:#e4e4e4;"></div>
<svg style="left:191px;top:415px" width="1284" height="371" viewBox="191 415 1284 371"><polygon points="1461,426 1471,426 1466,420.5" fill="#666"/><polygon points="1461,758 1471,758 1466,763.5" fill="#666"/><polygon points="203,772 203,782 197.5,777" fill="#666"/><polygon points="1446,772 1446,782 1451.5,777" fill="#666"/></svg>
<svg style="left:0;top:0" width="1628" height="821" viewBox="0 0 1628 821">
<g stroke="#ef466b" stroke-width="3" fill="none">
<rect x="189.5" y="229.5" width="858" height="28"/>
<ellipse cx="637.4" cy="214.1" rx="51.1" ry="11.8"/>
<ellipse cx="842.3" cy="214.5" rx="58.9" ry="11.9"/>
<ellipse cx="660" cy="243.5" rx="56.5" ry="10.2"/>
<ellipse cx="859" cy="245.1" rx="48.6" ry="13.2"/>
<rect x="189.5" y="450.5" width="1262" height="76"/>
</g></svg>
<div style="left:1495px;top:101px;width:118px;height:23px;background:#d0e1f3;border-radius:3px;"></div>
<div class="t" style="top:107.77px;font-size:10.9px;line-height:10.9px;left:1504.40px;">Tisk, export</div>
<svg style="left:1598px;top:107px" width="12" height="12" viewBox="1598 107 12 12"><polygon points="1601,110 1608,110 1604.5,114" fill="#000"/></svg>
<div style="left:1495px;top:134px;width:118px;height:23px;background:#d0e1f3;border-radius:3px;"></div>
<div class="t" style="top:140.77px;font-size:10.9px;line-height:10.9px;left:1504.40px;">Opravit</div>
<svg style="left:1598px;top:140px" width="12" height="12" viewBox="1598 140 12 12"><polygon points="1601,143 1608,143 1604.5,147" fill="#000"/></svg>
<div style="left:1495px;top:177px;width:118px;height:23px;background:#d0e1f3;border-radius:3px;"></div>
<div class="t" style="top:183.77px;font-size:10.9px;line-height:10.9px;left:1504.40px;">Občerstvit</div>
<div style="left:1495px;top:210px;width:118px;height:23px;background:#e4e4e4;border-radius:3px;"></div>
<div class="t" style="top:216.77px;font-size:10.9px;line-height:10.9px;color:#9a9a9a;left:1504.40px;">Přesun</div>
<div style="left:1495px;top:243px;width:118px;height:23px;background:#d0e1f3;border-radius:3px;"></div>
<div class="t" style="top:249.77px;font-size:10.9px;line-height:10.9px;left:1504.40px;">Osamostatnit</div>
<div style="left:1495px;top:276px;width:118px;height:23px;background:#d0e1f3;border-radius:3px;"></div>
<div class="t" style="top:282.77px;font-size:10.9px;line-height:10.9px;left:1504.40px;">Do žádostí</div>
<div style="left:1495px;top:309px;width:118px;height:23px;background:#d0e1f3;border-radius:3px;"></div>
<div class="t" style="top:315.77px;font-size:10.9px;line-height:10.9px;left:1504.40px;">Vrátit skupinu</div>
<div style="left:1495px;top:342px;width:118px;height:23px;background:#d0e1f3;border-radius:3px;"></div>
<div class="t" style="top:348.77px;font-size:10.9px;line-height:10.9px;left:1504.40px;">Skupina</div>
<svg style="left:1598px;top:348px" width="12" height="12" viewBox="1598 348 12 12"><polygon points="1601,351 1608,351 1604.5,355" fill="#000"/></svg>
<div style="left:1494px;top:375px;width:119px;height:23px;background:#d0e1f3;border:1px solid #2a6fcb;border-radius:3px;"></div>
<div class="t" style="top:381.77px;font-size:10.9px;line-height:10.9px;left:1504.40px;">Auditace</div>
<div style="left:1495px;top:408px;width:118px;height:23px;background:#d0e1f3;border-radius:3px;"></div>
<div class="t" style="top:414.77px;font-size:10.9px;line-height:10.9px;left:1504.40px;">Odauditace</div>
<div style="left:1495px;top:441px;width:118px;height:23px;background:#d0e1f3;border-radius:3px;"></div>
<div class="t" style="top:447.77px;font-size:10.9px;line-height:10.9px;left:1504.40px;">Zdr.doklad</div>
<svg style="left:1598px;top:447px" width="12" height="12" viewBox="1598 447 12 12"><polygon points="1601,450 1608,450 1604.5,454" fill="#000"/></svg>
<div style="left:1495px;top:484px;width:118px;height:23px;background:#d0e1f3;border-radius:3px;"></div>
<div class="t" style="top:490.77px;font-size:10.9px;line-height:10.9px;left:1504.40px;">Najít</div>
<div style="left:1495px;top:517px;width:118px;height:23px;background:#e4e4e4;border-radius:3px;"></div>
<div class="t" style="top:523.77px;font-size:10.9px;line-height:10.9px;color:#9a9a9a;left:1504.40px;">Najít další</div>
<div style="left:1495px;top:550px;width:118px;height:23px;background:#d0e1f3;border-radius:3px;"></div>
<div class="t" style="top:556.77px;font-size:10.9px;line-height:10.9px;left:1504.40px;">Najít doklad</div>
<div style="left:1495px;top:583px;width:118px;height:23px;background:#e4e4e4;border-radius:3px;"></div>
<div class="t" style="top:589.77px;font-size:10.9px;line-height:10.9px;color:#9a9a9a;left:1504.40px;">Vyrovnat</div>
<svg style="left:1598px;top:589px" width="12" height="12" viewBox="1598 589 12 12"><polygon points="1601,592 1608,592 1604.5,596" fill="#a6a6a6"/></svg>
<div class="t" style="top:801.03px;font-size:10.6px;line-height:10.6px;color:#444;left:10.00px;">Jaroslav Novák</div>
<div class="t" style="top:801.37px;font-size:10.2px;line-height:10.2px;color:#444;left:259.50px;">Spojení: DEMODATA_JAVA_STABLE</div>
<div class="t" style="top:800.86px;font-size:10.8px;line-height:10.8px;color:#444;left:509.80px;">Verze: 23.1.0</div>
<div class="t" style="top:800.82px;font-size:10.85px;line-height:10.85px;color:#444;left:659.70px;">06.03.2023 (Miroslav)</div>
<div class="t" style="top:800.77px;font-size:10.9px;line-height:10.9px;color:#444;left:809.60px;">Hotline: +420 296 397 330</div>
</body></html>
